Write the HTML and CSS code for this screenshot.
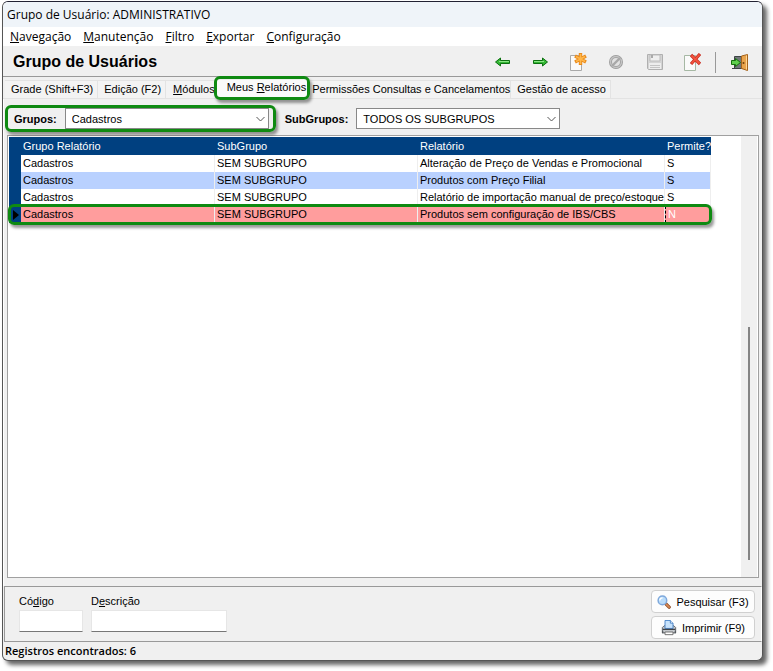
FILE: index.html
```html
<!DOCTYPE html>
<html lang="pt-BR">
<head>
  <meta charset="utf-8">
  <meta name="viewport" content="width=device-width, initial-scale=1.0">
  <title>Grupo de Usuários</title>
  <link rel="stylesheet" href="styles.css">
</head>
<body>

  <div class="window">
    <header class="titlebar">Grupo de Usuário: ADMINISTRATIVO</header>

    <nav class="menubar">
      <a href="#"><u>N</u>avegação</a>
      <a href="#"><u>M</u>anutenção</a>
      <a href="#"><u>F</u>iltro</a>
      <a href="#"><u>E</u>xportar</a>
      <a href="#"><u>C</u>onfiguração</a>
    </nav>

    <div class="toolbar">
      <h1>Grupo de Usuários</h1>
      <div class="tools">
        <button type="button" aria-label="Anterior">
          <svg width="18" height="18" viewBox="0 0 18 18"><path d="M1.500 9l5-4v2.500h9v3h-9V13z" fill="#35b835" stroke="#0b700f" stroke-linejoin="round"/><path d="M5 8.500h10" stroke="#8be684"/></svg>
        </button>
        <button type="button" aria-label="Próximo">
          <svg width="18" height="18" viewBox="0 0 18 18"><path d="M15.500 9l-5-4v2.500h-9v3h9V13z" fill="#35b835" stroke="#0b700f" stroke-linejoin="round"/><path d="M2 8.500h10" stroke="#8be684"/></svg>
        </button>
        <button type="button" aria-label="Novo">
          <svg width="18" height="18" viewBox="0 0 18 18"><path d="M.5 2.500h11v15H.5z" fill="#fafafa" stroke="#a9a9a9"/><path d="M10.500 0v12M5 3l11 6M5 9l11-6" stroke="#e98a1c" stroke-width="3.400"/><path d="M10.500 1v10M6 3.500l9 5M6 8.500l9-5" stroke="#ffb649" stroke-width="1.600"/></svg>
        </button>
        <button type="button" aria-label="Cancelar" disabled>
          <svg width="18" height="18" viewBox="0 0 18 18"><circle cx="8" cy="9" r="5.500" fill="#e2e2e2" stroke="#9a9a9a" stroke-width="3"/><circle cx="8" cy="9" r="5.500" fill="none" stroke="#c4c4c4" stroke-width="1.400"/><path d="M4 13l8-8" stroke="#a8a8a8" stroke-width="2.400"/></svg>
        </button>
        <button type="button" aria-label="Salvar" disabled>
          <svg width="18" height="18" viewBox="0 0 18 18"><path d="M1.500 1.500h15v15h-14l-1-1z" fill="#d4d4d4" stroke="#b0b0b0"/><path d="M4 2h10v6H4z" fill="#efefef" stroke="#bdbdbd"/><path d="M6 2v3" stroke="#aaa" stroke-width="2"/><path d="M3 10h12v6H3z" fill="#ededed"/><path d="M4 12.500h10M4 14.500h10" stroke="#c4c4c4"/></svg>
        </button>
        <button type="button" aria-label="Excluir">
          <svg width="18" height="18" viewBox="0 0 18 18"><path d="M.5 2.500h11v15H.5z" fill="#fafafa" stroke="#a6b8a4"/><path d="M7 2l9 9M16 1L7 11" stroke="#c92a1d" stroke-width="3.200"/><path d="M7.500 2.500l8 8M15.500 1.500l-8 9" stroke="#f2553f" stroke-width="1.800"/></svg>
        </button>
        <span class="separator"></span>
        <button type="button" aria-label="Sair">
          <svg width="18" height="18" viewBox="0 0 18 18"><path d="M4.500 3.500h8v12h-8z" fill="#71777a" stroke="#3d4346"/><path d="M2 15.500h11" stroke="#3d4346"/><path d="M11.500 3l6-1.500v16l-6-2z" fill="#e8a34c" stroke="#a5631b"/><path d="M16.500 2.500v14" stroke="#ffd694"/><circle cx="13.500" cy="10" r="1" fill="#71400d"/><path d="M1.500 7.500h4v-2l5 4-5 4v-2h-4z" fill="#5fd04e" stroke="#17700f"/></svg>
        </button>
      </div>
    </div>

    <div class="tabs" role="tablist">
      <button type="button" role="tab">Grade (Shift+F3)</button>
      <button type="button" role="tab">Edição (F2)</button>
      <button type="button" role="tab" class="tab-modulos"><u>M</u>ódulos</button>
      <button type="button" role="tab" class="active highlight" aria-selected="true">Meus <u>R</u>elatórios</button>
      <button type="button" role="tab" class="tab-permissoes">Permissões Consultas e Cancelamentos</button>
      <button type="button" role="tab">Gestão de acesso</button>
    </div>

    <main>
      <div class="filters">
        <div class="filter highlight">
          <label for="grupos">Grupos:</label>
          <span class="combo">
            <select id="grupos"><option>Cadastros</option></select>
            <svg width="9" height="6" viewBox="0 0 9 6"><path d="M.5 1l4 4 4-4" fill="none" stroke="#555"/></svg>
          </span>
        </div>
        <div class="filter">
          <label for="subgrupos">SubGrupos:</label>
          <span class="combo">
            <select id="subgrupos"><option>TODOS OS SUBGRUPOS</option></select>
            <svg width="9" height="6" viewBox="0 0 9 6"><path d="M.5 1l4 4 4-4" fill="none" stroke="#555"/></svg>
          </span>
        </div>
      </div>

      <div class="grid">
        <div class="grid-body">
          <table>
            <colgroup>
              <col class="col-mark"><col class="col-grupo"><col class="col-sub"><col class="col-rel"><col class="col-perm">
            </colgroup>
            <thead>
              <tr><th></th><th>Grupo Relatório</th><th>SubGrupo</th><th>Relatório</th><th>Permite?</th></tr>
            </thead>
            <tbody>
              <tr><th></th><td>Cadastros</td><td>SEM SUBGRUPO</td><td>Alteração de Preço de Vendas e Promocional</td><td>S</td></tr>
              <tr class="even"><th></th><td>Cadastros</td><td>SEM SUBGRUPO</td><td>Produtos com Preço Filial</td><td>S</td></tr>
              <tr><th></th><td>Cadastros</td><td>SEM SUBGRUPO</td><td>Relatório de importação manual de preço/estoque</td><td>S</td></tr>
              <tr class="selected highlight"><th><span class="marker"></span></th><td>Cadastros</td><td>SEM SUBGRUPO</td><td>Produtos sem configuração de IBS/CBS</td><td class="focus">N</td></tr>
            </tbody>
          </table>
        </div>
        <div class="scrollbar"><div class="thumb"></div></div>
      </div>
    </main>

    <form class="search">
      <div class="field codigo">
        <label for="codigo">Có<u>d</u>igo</label>
        <input type="text" id="codigo">
      </div>
      <div class="field descricao">
        <label for="descricao">D<u>e</u>scrição</label>
        <input type="text" id="descricao">
      </div>
      <div class="actions">
        <button type="button">
          <svg width="14" height="14" viewBox="0 0 15 15"><path d="M9.500 9.500l3.500 3.500" stroke="#8b4a25" stroke-width="3.600" stroke-linecap="round"/><path d="M10 10l3 3" stroke="#d98a55" stroke-width="1.800" stroke-linecap="round"/><circle cx="5.800" cy="5.800" r="4.600" fill="#b9dcfb" stroke="#7fa9dc" stroke-width="1.600"/><path d="M3 6a3 3 0 0 1 3-3" fill="none" stroke="#fff" stroke-width="1.400"/></svg>
          Pesquisar (F3)
        </button>
        <button type="button">
          <svg width="16" height="16" viewBox="0 0 18 18"><path d="M1.500 8.500l2-2h11l2 2v6h-15z" fill="#c4c8cc" stroke="#555a60"/><path d="M4.500 9.500v-9h6l3 3v6z" fill="#c7e2fb" stroke="#3f7cc4"/><path d="M10.500.5v3h3" fill="#fff" stroke="#3f7cc4"/><path d="M2 10.500h14" stroke="#3d4147" stroke-width="1.500"/><path d="M4.500 13.500h9v3h-9z" fill="#fff" stroke="#666"/><path d="M2 12v3M16 12v3" stroke="#44484d"/></svg>
          Imprimir (F9)
        </button>
      </div>
    </form>

    <footer>Registros encontrados: 6</footer>
  </div>

</body>
</html>
```

FILE: styles.css
```css
* {
  box-sizing: border-box;
}

body {
  margin: 0;
  padding: 1px 10px 10px 2px;
  background-color: #fff;
  color: #000;
  font: 11px/14px "Liberation Sans", Arial, sans-serif;
}

button, input, select {
  font: inherit;
  color: inherit;
  margin: 0;
}

.window {
  display: flex;
  flex-direction: column;
  min-height: calc(100vh - 11px);
  background-color: #f0f0f0;
  border: 1px solid #555;
  border-top-color: #223;
  border-radius: 6px;
  overflow: hidden;
  box-shadow: 4px 4px 4px rgba(0, 0, 0, 0.6);
}

.titlebar {
  height: 25px;
  padding: 5px 4px;
  background-color: #eff4f9;
  font: 12px/16px "Open Sans", "Noto Sans", sans-serif;
}

.menubar {
  display: flex;
  gap: 12px;
  height: 19px;
  padding: 0 7px;
  background-color: #fff;
  font: 12px/19px "Open Sans", "Noto Sans", sans-serif;
}

.menubar a {
  color: #000;
  text-decoration: none;
}

.toolbar {
  display: flex;
  align-items: center;
  justify-content: space-between;
  height: 31px;
  padding: 2px 14px 0 10px;
  border-bottom: 1px solid #999;
}

.toolbar h1 {
  margin: 0;
  font-size: 16px;
  line-height: 20px;
}

.tools {
  display: flex;
  align-items: center;
  gap: 20px;
}

.tools button {
  display: flex;
  width: 18px;
  height: 18px;
  padding: 0;
  border: none;
  background: none;
}

.separator {
  width: 1px;
  height: 21px;
  margin: 0 -6px 0 -7px;
  background-color: #999;
}

/* Tabs */
.tabs {
  display: flex;
  height: 22px;
  padding: 3px 0 0 2px;
  border-bottom: 1px solid #e3e3e3;
}

.tabs button {
  padding: 0 4px 2px 6px;
  border: 1px solid #e3e3e3;
  border-width: 1px 1px 0 0;
  background-color: #f3f3f3;
  white-space: nowrap;
}

.tabs .tab-modulos {
  padding-left: 7px;
  padding-right: 0;
}

.tabs .tab-permissoes {
  padding-left: 4px;
  padding-right: 0;
}

.tabs .active {
  padding: 0 2px 4px 11px;
  border: none;
  background-color: #fafafa;
}

/* Green frame round the marked items */
.highlight {
  position: relative;
}

.highlight::after {
  content: "";
  position: absolute;
  inset: 0;
  border: 3px solid #0f8a12;
  border-radius: 6px;
  box-shadow: 2px 3px 3px rgba(0, 0, 0, 0.4);
  pointer-events: none;
}

.active.highlight::after {
  inset: -4px -2px -2px -2px;
}

.selected.highlight::after {
  inset: -2px -1px -2px -1px;
  z-index: 1;
}

main {
  display: flex;
  flex: 1;
  flex-direction: column;
  padding: 6px 3px 8px 3px;
  border-left: 1px solid #fff;
}

.filters {
  display: flex;
  gap: 9px;
  height: 30px;
  margin-left: -2px;
}

.filter {
  display: flex;
  align-items: center;
  height: 27px;
  padding: 0 7px 0 9px;
}

.filter:last-child {
  padding: 0;
}

.filter label {
  margin-right: 8px;
  font-weight: bold;
}

.combo {
  position: relative;
  width: 204px;
}

.combo select {
  display: block;
  width: 100%;
  height: 21px;
  padding: 0 6px;
  border: 1px solid #888;
  border-radius: 0;
  background-color: #fff;
  appearance: none;
}

.combo svg {
  position: absolute;
  top: 8px;
  right: 4px;
  pointer-events: none;
}

/* Data grid */
.grid {
  display: flex;
  flex: 1;
  border: 1px solid #a0a0a0;
  background-color: #fff;
}

.grid-body {
  flex: 1;
  padding: 1px 0 0 1px;
}

table {
  width: 702px;
  table-layout: fixed;
  border-spacing: 0;
}

.col-mark {
  width: 12px;
}

.col-grupo {
  width: 194px;
}

.col-sub {
  width: 203px;
}

.col-rel {
  width: 247px;
}

.col-perm {
  width: 46px;
}

th, td {
  height: 17px;
  padding: 0 2px;
  text-align: left;
  font-weight: normal;
  line-height: 17px;
  white-space: nowrap;
}

th {
  background-color: #004080;
  color: #fff;
}

thead th {
  height: 18px;
}

tbody th {
  padding: 0;
}

td {
  border-right: 1px solid #eee;
}

.even td {
  background-color: #b9d1ff;
}

.selected td {
  background-color: #ff9d9d;
}

td.focus {
  border-left: 1px dashed #000;
  color: #fff;
}

.marker {
  display: block;
  margin-left: 4px;
  width: 6px;
  border: 5px solid transparent;
  border-left: 6px solid #000;
  border-right: none;
}

.scrollbar {
  display: flex;
  justify-content: center;
  align-items: flex-end;
  width: 16px;
  margin-right: 1px;
  padding-bottom: 17px;
  background-color: #f0f0f0;
}

.thumb {
  width: 2px;
  height: 55%;
  background-color: #858585;
}

/* Search panel */
.search {
  display: flex;
  gap: 8px;
  height: 56px;
  margin-left: 1px;
  padding: 3px 6px 0 14px;
  border: 1px solid #999;
  border-right-color: #fff;
}

.field {
  display: flex;
  flex-direction: column;
  gap: 2px;
  padding-top: 4px;
}

.codigo {
  width: 64px;
}

.descricao {
  width: 136px;
}

.field input {
  width: 100%;
  height: 22px;
  border: 1px solid #e6e6e6;
  border-bottom-color: #777;
  background-color: #fff;
}

.actions {
  display: flex;
  flex-direction: column;
  gap: 3px;
  margin-left: auto;
}

.actions button {
  display: flex;
  align-items: center;
  justify-content: center;
  gap: 5px;
  width: 104px;
  height: 23px;
  padding: 0;
  border: 1px solid #d0d0d0;
  border-radius: 4px;
  background-color: #fdfdfd;
  white-space: nowrap;
}

footer {
  height: 18px;
  padding: 0 2px;
  font: 600 11px/18px "Open Sans", "Noto Sans", sans-serif;
}
```
